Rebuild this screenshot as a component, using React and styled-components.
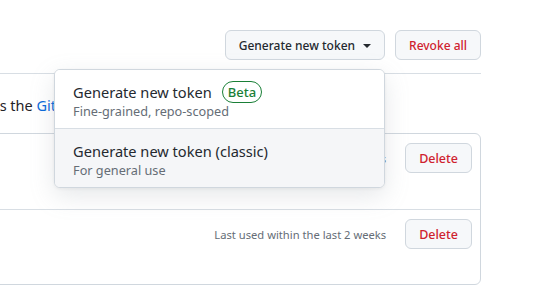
import React from 'react';
import styled, { createGlobalStyle } from 'styled-components';

const GlobalStyle = createGlobalStyle`
    html, body {
        margin: 0;
        padding: 0;
        background: #ffffff;
        overflow: hidden;
    }
    body {
        font-family: 'Noto Sans', 'Open Sans', sans-serif;
        color: #1f2328;
    }
`;

const Page = styled.div`
    width: 557px;
    height: 299px;
    overflow: hidden;
`;

// the settings column runs off the left edge of the window
const Main = styled.main`
    width: 844px;
    margin-left: -363px;
    padding-top: 30px;
`;

const Header = styled.div`
    display: flex;
    justify-content: flex-end;
    align-items: center;
    gap: 10px;
    padding-bottom: 13px;
    border-bottom: 1px solid #d8dee4;
`;

const Button = styled.button`
    display: inline-flex;
    align-items: center;
    gap: 8px;
    height: 30px;
    padding: 0 ${(p) => p.$pad || 13}px;
    font-family: inherit;
    font-size: ${(p) => p.$size || 12}px;
    font-weight: 500;
    color: ${(p) => (p.$danger ? '#cf222e' : '#24292f')};
    background: #f6f8fa;
    border: 1px solid #d0d7de;
    border-radius: 6px;
    cursor: pointer;
`;

const Caret = styled.span`
    width: 0;
    height: 0;
    border-left: 4px solid transparent;
    border-right: 4px solid transparent;
    border-top: 4px solid #24292f;
    margin-top: 1px;
`;

const MenuAnchor = styled.div`
    position: relative;
`;

const Menu = styled.div`
    position: absolute;
    top: calc(100% + 9px);
    right: 0;
    width: 329px;
    background: #ffffff;
    border: 1px solid #d0d7de;
    border-radius: 6px;
    box-shadow: 0 8px 24px rgba(140, 149, 159, 0.22), 0 1px 3px rgba(31, 35, 40, 0.06);
    overflow: hidden;
    z-index: 10;
`;

const MenuItem = styled.div`
    display: flex;
    flex-direction: column;
    height: 58px;
    padding: 11px 18px 0;
    box-sizing: border-box;
    background: ${(p) => (p.$active ? '#f5f6f8' : '#ffffff')};
    & + & {
        border-top: 1px solid #d8dee4;
        height: 59px;
    }
`;

const ItemTitle = styled.div`
    display: flex;
    align-items: center;
    gap: 10px;
    font-size: 14.6px;
    line-height: 22px;
    color: #24292f;
`;

const Label = styled.span`
    display: inline-flex;
    align-items: center;
    height: 22px;
    box-sizing: border-box;
    padding: 0 5px;
    font-size: 13px;
    font-weight: 500;
    color: #1a7f37;
    border: 1px solid #1a7f37;
    border-radius: 999px;
`;

const ItemDesc = styled.div`
    font-size: 12.7px;
    line-height: 16px;
    color: #656d76;
`;

const Intro = styled.p`
    margin: 0;
    padding: 20px 0 0 0;
    height: 39px;
    font-size: 14.5px;
    line-height: 22px;
    color: #1f2328;
    a {
        color: #0969da;
        text-decoration: none;
    }
`;

const Box = styled.div`
    border: 1px solid #d0d7de;
    border-radius: 6px;
`;

const Row = styled.div`
    display: flex;
    align-items: flex-start;
    justify-content: space-between;
    height: 75px;
    padding: 9px 8px 0 16px;
    box-sizing: border-box;
    & + & {
        border-top: 1px solid #d8dee4;
    }
`;

const TokenName = styled.div`
    font-size: 14px;
    font-weight: 600;
    color: #0969da;
    padding-top: 6px;
`;

const RowRight = styled.div`
    display: flex;
    align-items: center;
    gap: 19px;
`;

const Meta = styled.span`
    font-size: 11.2px;
    color: #656d76;
`;

const tokens = [
    { name: 'deploy-bot', used: 'Last used within the last 2 weeks' },
    { name: 'ci-runner', used: 'Last used within the last 2 weeks' },
];

export default function App() {
    return (
        <Page>
            <GlobalStyle />
            <Main>
                <Header>
                    <MenuAnchor>
                        <Button>
                            Generate new token <Caret />
                        </Button>
                        <Menu>
                            <MenuItem>
                                <ItemTitle>
                                    Generate new token <Label>Beta</Label>
                                </ItemTitle>
                                <ItemDesc>Fine-grained, repo-scoped</ItemDesc>
                            </MenuItem>
                            <MenuItem $active>
                                <ItemTitle>Generate new token (classic)</ItemTitle>
                                <ItemDesc>For general use</ItemDesc>
                            </MenuItem>
                        </Menu>
                    </MenuAnchor>
                    <Button $danger>Revoke all</Button>
                </Header>
                <Intro>
                    Tokens you have generated that can be used to access the <a href="#">GitHub API</a>.
                </Intro>
                <Box>
                    {tokens.map((t) => (
                        <Row key={t.name}>
                            <TokenName>{t.name}</TokenName>
                            <RowRight>
                                <Meta>{t.used}</Meta>
                                <Button $danger $size={12.5}>
                                    Delete
                                </Button>
                            </RowRight>
                        </Row>
                    ))}
                </Box>
            </Main>
        </Page>
    );
}
